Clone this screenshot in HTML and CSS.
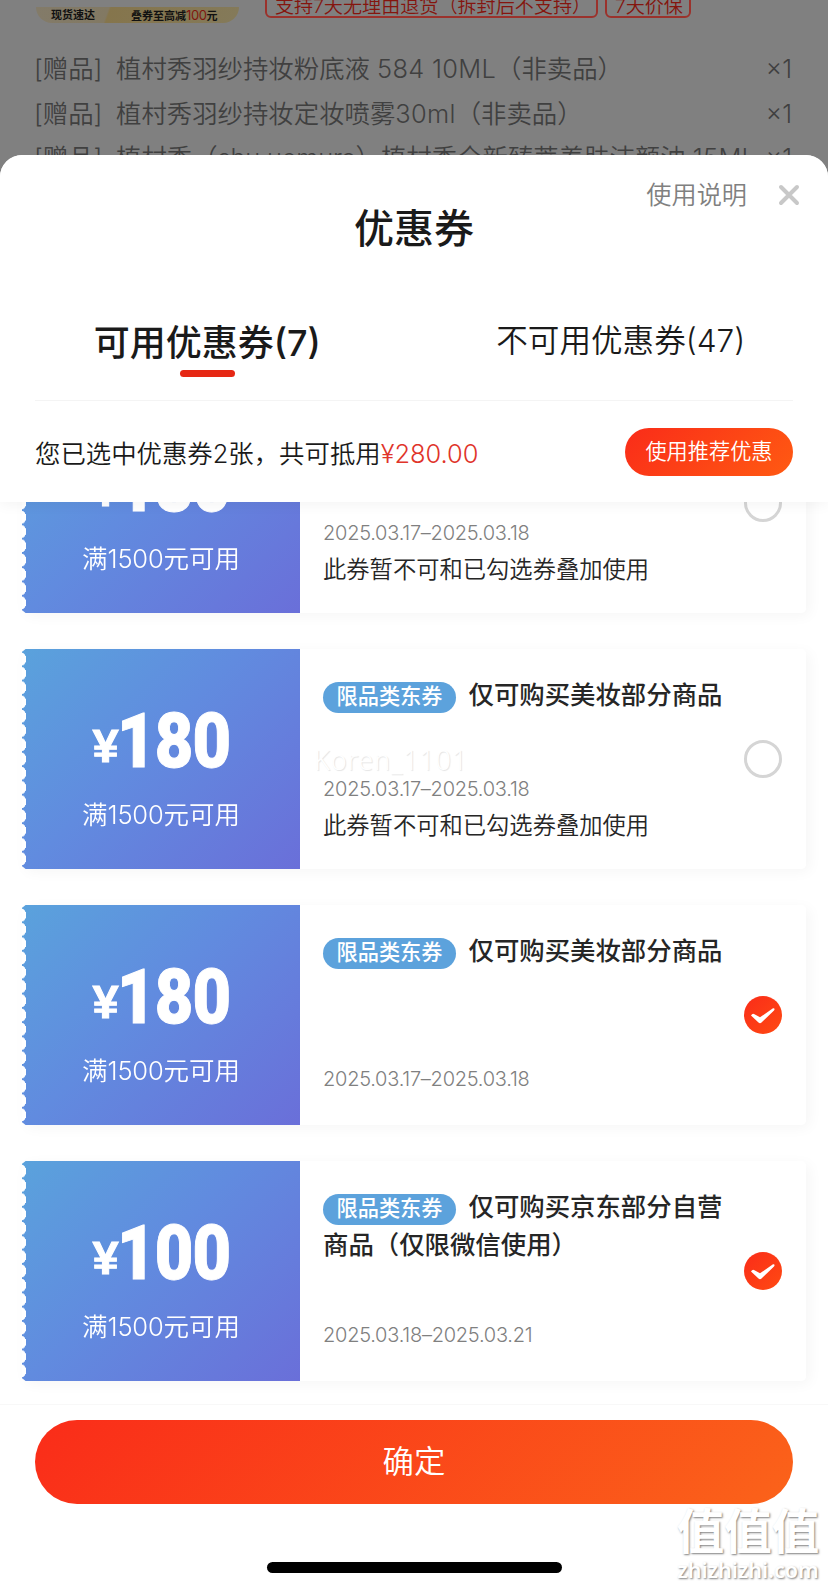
FILE: index.html
```
<!DOCTYPE html>
<html lang="zh-CN">
<head>
    <meta charset="UTF-8">
    <meta name="viewport" content="width=device-width, initial-scale=1.0">
    <title>优惠券</title>
    <link rel="stylesheet" href="styles.css">
</head>
<body>

    <div class="order">
        <div class="order-top">
            <div class="promo"><span class="promo-left">现货速达</span><span class="promo-right">叠券至高减<b>100</b>元</span></div>
            <span class="tag tag-return">支持7天无理由退货（拆封后不支持）</span>
            <span class="tag tag-price">7天价保</span>
        </div>
        <div class="gift"><span class="gift-label">[赠品]</span><span class="gift-name">植村秀羽纱持妆粉底液 <i>584 10ML</i>（非卖品）</span><span class="gift-num">×1</span></div>
        <div class="gift"><span class="gift-label">[赠品]</span><span class="gift-name">植村秀羽纱持妆定妆喷雾<i>30ml</i>（非卖品）</span><span class="gift-num">×1</span></div>
        <div class="gift"><span class="gift-label">[赠品]</span><span class="gift-name">植村秀（<i class="brand">shu uemura</i>）植村秀全新臻萃养肤洁颜油 <i>15ML</i></span><span class="gift-num">×1</span></div>
    </div>

    <div class="sheet">
        <div class="sheet-header">
            <div class="help">
                <span>使用说明</span>
                <svg class="close" viewBox="0 0 22 22"><path d="M3 3L19 19M19 3L3 19"/></svg>
            </div>
            <h1>优惠券</h1>
            <div class="tabs">
                <div class="tab active">可用优惠券(7)</div>
                <div class="tab">不可用优惠券(47)</div>
            </div>
            <div class="summary">
                <p>您已选中优惠券2张，共可抵用<span class="red">¥280.00</span></p>
                <button class="recommend">使用推荐优惠</button>
            </div>
        </div>

        <div class="coupon-list">
            <div class="coupon">
                <div class="amount">
                    <div class="price"><small>¥</small><b>180</b></div>
                    <div class="limit">满<i>1500</i>元可用</div>
                </div>
                <div class="info">
                    <div class="info-text">
                        <div class="name"></div>
                        <div class="date">2025.03.17–2025.03.18</div>
                        <div class="note">此券暂不可和已勾选券叠加使用</div>
                    </div>
                    <span class="radio"></span>
                </div>
            </div>

            <div class="coupon">
                <div class="amount">
                    <div class="price"><small>¥</small><b>180</b></div>
                    <div class="limit">满<i>1500</i>元可用</div>
                </div>
                <div class="info">
                    <div class="info-text">
                        <div class="name"><span class="pill">限品类东券</span>仅可购买美妆部分商品</div>
                        <div class="date">2025.03.17–2025.03.18</div>
                        <div class="note">此券暂不可和已勾选券叠加使用</div>
                    </div>
                    <span class="radio"></span>
                </div>
                <span class="user-mark">Koren_1101</span>
            </div>

            <div class="coupon">
                <div class="amount">
                    <div class="price"><small>¥</small><b>180</b></div>
                    <div class="limit">满<i>1500</i>元可用</div>
                </div>
                <div class="info">
                    <div class="info-text">
                        <div class="name"><span class="pill">限品类东券</span>仅可购买美妆部分商品</div>
                        <div class="date last">2025.03.17–2025.03.18</div>
                    </div>
                    <span class="radio checked"><svg viewBox="0 0 38 38"><path d="M7 19.500Q8.500 17 10.500 18.300L16 21.300L29 12.300Q31.500 12 30 14.600L17.500 26.500Q16 27.800 14.500 26.500Z"/></svg></span>
                </div>
            </div>

            <div class="coupon">
                <div class="amount">
                    <div class="price"><small>¥</small><b>100</b></div>
                    <div class="limit">满<i>1500</i>元可用</div>
                </div>
                <div class="info">
                    <div class="info-text">
                        <div class="name"><span class="pill">限品类东券</span>仅可购买京东部分自营商品（仅限微信使用）</div>
                        <div class="date last">2025.03.18–2025.03.21</div>
                    </div>
                    <span class="radio checked"><svg viewBox="0 0 38 38"><path d="M7 19.500Q8.500 17 10.500 18.300L16 21.300L29 12.300Q31.500 12 30 14.600L17.500 26.500Q16 27.800 14.500 26.500Z"/></svg></span>
                </div>
            </div>
        </div>

        <div class="footer">
            <button class="confirm">确定</button>
            <div class="home-bar"></div>
        </div>
    </div>

    <div class="watermark">
        <div class="wm-big">值值值</div>
        <div class="wm-small">zhizhizhi.com</div>
    </div>

</body>
</html>
```
FILE: styles.css
```
* {
    box-sizing: border-box;
}

body {
    margin: 0;
    width: 828px;
    height: 1588px;
    overflow: hidden;
    position: relative;
    background-color: #808080;
    font-family: Inter, "Noto Sans CJK SC", sans-serif;
    font-weight: 350;
    color: #1a1a1a;
}

i {
    font-style: normal;
}

button {
    border: none;
    padding: 0;
    color: #fff;
    font-family: inherit;
    font-weight: 350;
}

/* order page behind the sheet */
.order {
    height: 155px;
    overflow: hidden;
    padding: 0 36px 0 34px;
    color: #404040;
}

.order-top {
    display: flex;
    align-items: flex-end;
    height: 23px;
    margin-bottom: 24px;
}

.promo {
    display: flex;
    width: 203px;
    height: 16px;
    margin: 0 26px 0 2px;
    font-size: 11px;
    line-height: 16px;
    font-weight: 700;
    color: #111;
    border-radius: 0 0 16px 16px;
    overflow: hidden;
    background: linear-gradient(110deg, #837b69 0, #827963 35%, #85754c 36%, #847a5a 100%);
}

.promo-left {
    width: 95px;
    padding-left: 15px;
}

.promo b {
    font-size: 13px;
    font-weight: 400;
    letter-spacing: -.4px;
    color: #80170f;
}

.tag {
    height: 34px;
    margin-bottom: 5px;
    padding: 7px 0 0 8px;
    border: 2px solid #9b322c;
    border-radius: 6px;
    font-size: 19.1px;
    line-height: 26px;
    white-space: nowrap;
    color: #85150e;
}

.tag-return {
    width: 333px;
    margin-right: 7px;
}

.tag-price {
    width: 86px;
    padding-left: 8px;
}

.gift {
    display: flex;
    height: 44.7px;
    line-height: 44.7px;
    font-size: 25.4px;
    white-space: nowrap;
}

.gift-label {
    width: 82px;
}

.gift-name {
    flex: 1;
}

.gift-name i {
    letter-spacing: .3px;
}

.gift-name .brand {
    letter-spacing: -.2px;
}

.gift-num {
    font-size: 25px;
}

/* bottom sheet */
.sheet {
    height: 1433px;
    display: flex;
    flex-direction: column;
    background-color: #fff;
    border-radius: 22px 22px 0 0;
    overflow: hidden;
}

.sheet-header {
    position: relative;
    z-index: 1;
    height: 347px;
    padding: 20px 35px 0;
    background-color: #fff;
    box-shadow: 0 2px 14px rgba(0, 0, 0, .05);
}

.help {
    display: flex;
    justify-content: flex-end;
    align-items: center;
    gap: 31px;
    height: 36px;
    margin-right: -7px;
    font-size: 25.2px;
    color: #808080;
}

.close {
    width: 22px;
    height: 22px;
    margin-top: 4px;
    stroke: #c8c8c8;
    stroke-width: 4;
    stroke-linecap: round;
}

h1 {
    margin: -5px 0 0;
    height: 46px;
    line-height: 46px;
    font-size: 40px;
    font-weight: 500;
    text-align: center;
}

.tabs {
    display: flex;
    height: 149px;
    padding-top: 69px;
    border-bottom: 1px solid #f4f4f4;
}

.tab {
    flex: 1;
    height: 40px;
    line-height: 40px;
    font-size: 31.6px;
    text-align: center;
    padding-left: 33px;
}

.tab.active {
    padding: 2px 36px 0 0;
    font-size: 36px;
    font-weight: 500;
}

.tab.active::after {
    content: "";
    display: block;
    width: 55px;
    height: 7px;
    margin: 7px auto 0;
    border-radius: 4px;
    background-color: #e62814;
}

.summary {
    display: flex;
    justify-content: space-between;
    align-items: center;
    height: 101px;
    font-size: 25.4px;
}

.summary p {
    margin: 0;
}

.red {
    color: #e0342a;
}

.recommend {
    width: 168px;
    height: 48px;
    padding-bottom: 5px;
    border-radius: 24px;
    font-size: 21.2px;
    background: linear-gradient(135deg, #fa2c19, #ff5a12);
}

.coupon-list {
    flex: 1;
    min-height: 0;
    display: flex;
    flex-direction: column;
    justify-content: flex-end;
    gap: 36px;
    padding: 0 22px 23px;
    overflow: hidden;
}

.coupon {
    flex: none;
    position: relative;
    display: flex;
    height: 220px;
    border-radius: 5px;
    background: linear-gradient(90deg, transparent 10px, #fff 10px);
    box-shadow: 4px 3px 14px rgba(0, 0, 0, .04);
}

.amount {
    width: 278px;
    padding-top: 52px;
    color: #fff;
    text-align: center;
    border-radius: 4px 0 0 4px;
    background: linear-gradient(135deg, #5aa2dc 0%, #618bdf 45%, #6a6fd9 100%);
    -webkit-mask: radial-gradient(circle 7.4px at -2.9px 50%, transparent 96%, #000) 0 3px / 100% 14.27px repeat-y;
    mask: radial-gradient(circle 7.4px at -2.9px 50%, transparent 96%, #000) 0 3px / 100% 14.27px repeat-y;
}

.price {
    display: flex;
    justify-content: center;
    height: 80px;
    line-height: 80px;
    font-family: Roboto, sans-serif;
}

.price b {
    width: 111px;
    font-size: 76.5px;
    font-weight: 900;
    letter-spacing: -1px;
    transform: translateX(-2px) scaleX(.87);
    transform-origin: 0 50%;
    -webkit-text-stroke: 1px #fff;
}

.price small {
    padding-top: 5px;
    font-family: "Liberation Sans", sans-serif;
    font-size: 47px;
    font-weight: 700;
    -webkit-text-stroke: 1px #fff;
}

.limit {
    height: 36px;
    line-height: 36px;
    margin-top: 16px;
    font-size: 25.5px;
}

.limit i {
    letter-spacing: -.2px;
}

.info {
    flex: 1;
    display: flex;
    align-items: center;
    justify-content: space-between;
    padding: 0 24px 0 23px;
}

.info-text {
    width: 404px;
    height: 220px;
    display: flex;
    flex-direction: column;
    padding: 27px 0 26px;
}

.name {
    flex: 1;
    line-height: 38.4px;
    font-size: 25.4px;
    font-weight: 500;
    color: #262626;
}

.pill {
    display: inline-block;
    width: 133px;
    height: 31px;
    margin-right: 12.5px;
    line-height: 29px;
    border-radius: 16px;
    font-size: 21.2px;
    text-align: center;
    vertical-align: 0;
    color: #fff;
    background-color: #5ca2dc;
}

.date {
    height: 38px;
    line-height: 38px;
    font-size: 20px;
    letter-spacing: -.25px;
    color: #808080;
}

.date.last {
    height: 39px;
}

.note {
    height: 35px;
    line-height: 35px;
    font-size: 23.3px;
    color: #262626;
}

.radio {
    width: 38px;
    height: 38px;
    border: 3px solid #d5d5d5;
    border-radius: 50%;
}

.radio.checked {
    border: none;
    background: linear-gradient(135deg, #fa2c19, #ff4a12);
}

.radio svg {
    display: block;
    fill: #fff;
}

.user-mark {
    position: absolute;
    left: 292px;
    top: 92px;
    font-family: "Noto Sans", sans-serif;
    font-size: 27px;
    letter-spacing: .8px;
    line-height: 38px;
    color: #fff;
    text-shadow: 1px 1px 1px rgba(0, 0, 0, .11);
}

.footer {
    height: 184px;
    padding: 15px 35px 0;
    border-top: 1px solid #f8f8f8;
}

.confirm {
    display: block;
    width: 758px;
    height: 84px;
    padding-bottom: 5px;
    border-radius: 42px;
    font-size: 31.4px;
    background: linear-gradient(135deg, #fa2c19, #fb631a);
}

.home-bar {
    width: 295px;
    height: 11px;
    margin: 58px auto 0;
    border-radius: 6px;
    background-color: #000;
}

.watermark {
    position: absolute;
    right: 8px;
    bottom: 5px;
    width: 144px;
    text-align: center;
    color: #fff;
    text-shadow: 1px 1px 2px rgba(0, 0, 0, .5);
    white-space: nowrap;
}

.wm-big {
    font-size: 47.5px;
    line-height: 50px;
    font-weight: 700;
}

.wm-small {
    font-family: "Noto Sans", sans-serif;
    font-size: 21.5px;
    line-height: 26px;
    font-weight: 600;
}
```
